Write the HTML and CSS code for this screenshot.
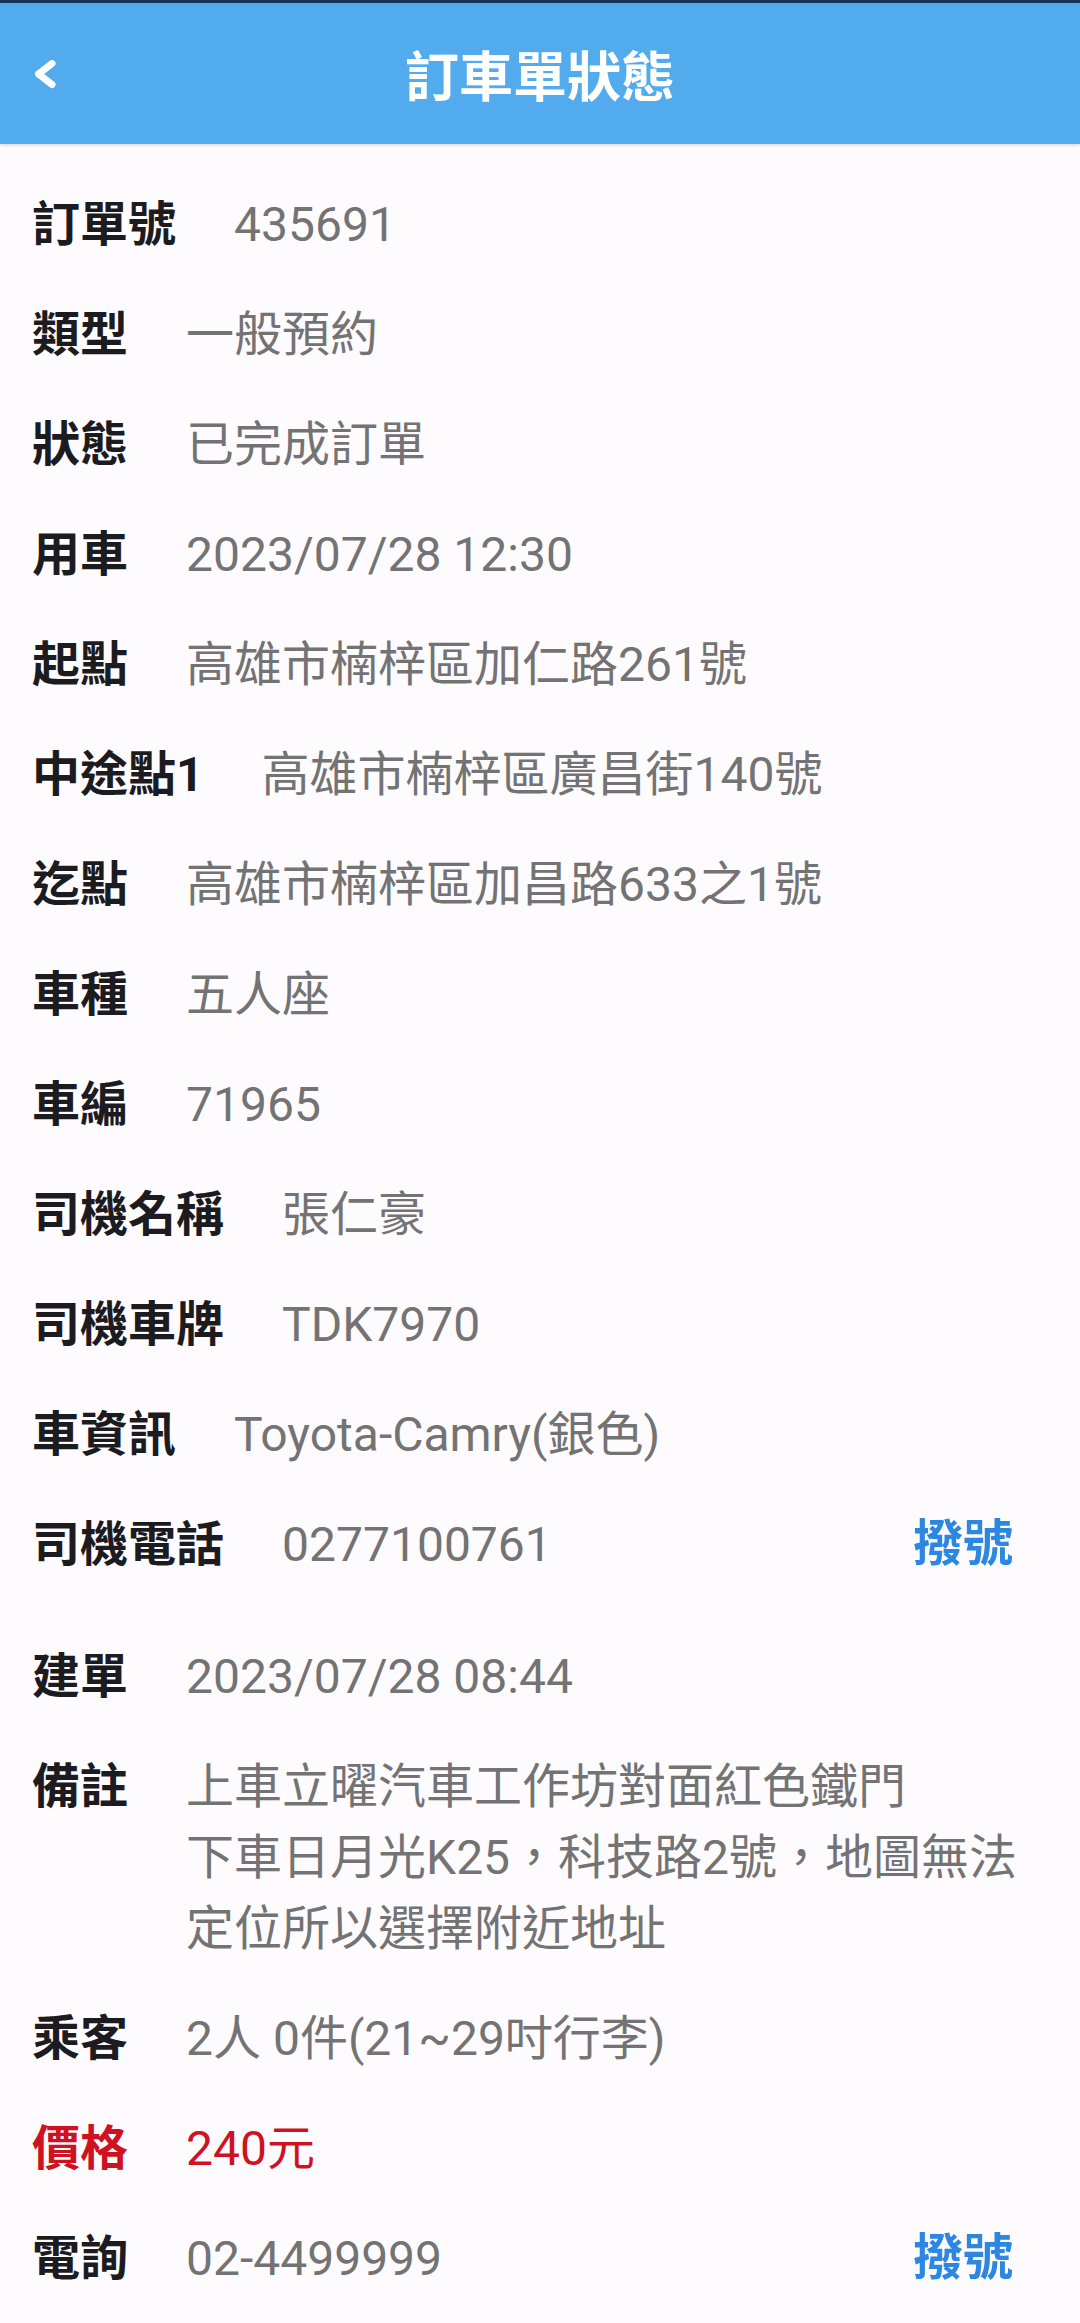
FILE: index.html
```html
<!DOCTYPE html>
<html lang="zh-Hant">
<head>
<meta charset="utf-8">
<title>訂車單狀態</title>
<link rel="stylesheet" href="styles.css">
</head>
<body>
<header class="appbar">
  <div class="appbar__lead">
    <svg class="appbar__back" width="80" height="141" viewBox="0 0 80 141" aria-label="返回">
      <polyline points="52,60.5 38.5,71 52,81.5" fill="none" stroke="#ffffff" stroke-width="7" stroke-linecap="round" stroke-linejoin="round"/>
    </svg>
  </div>
  <h1 class="appbar__title">訂車單狀態</h1>
  <div class="appbar__trail"></div>
</header>

<main class="detail">
  <div class="row"><span class="label">訂單號</span><span class="value">435691</span></div>
  <div class="row"><span class="label">類型</span><span class="value">一般預約</span></div>
  <div class="row"><span class="label">狀態</span><span class="value">已完成訂單</span></div>
  <div class="row"><span class="label">用車</span><span class="value">2023/07/28 12:30</span></div>
  <div class="row"><span class="label">起點</span><span class="value">高雄市楠梓區加仁路261號</span></div>
  <div class="row"><span class="label">中途點1</span><span class="value">高雄市楠梓區廣昌街140號</span></div>
  <div class="row"><span class="label">迄點</span><span class="value">高雄市楠梓區加昌路633之1號</span></div>
  <div class="row"><span class="label">車種</span><span class="value">五人座</span></div>
  <div class="row"><span class="label">車編</span><span class="value">71965</span></div>
  <div class="row"><span class="label">司機名稱</span><span class="value">張仁豪</span></div>
  <div class="row"><span class="label">司機車牌</span><span class="value">TDK7970</span></div>
  <div class="row"><span class="label">車資訊</span><span class="value">Toyota-Camry(銀色)</span></div>
  <div class="row row--call"><span class="label">司機電話</span><span class="value">0277100761</span><button class="call">撥號</button></div>
  <div class="row"><span class="label">建單</span><span class="value">2023/07/28 08:44</span></div>
  <div class="row"><span class="label">備註</span><span class="value">上車立曜汽車工作坊對面紅色鐵門<br>下車日月光K25，科技路2號，地圖無法<br>定位所以選擇附近地址</span></div>
  <div class="row"><span class="label">乘客</span><span class="value">2人 0件(21~29吋行李)</span></div>
  <div class="row row--price"><span class="label">價格</span><span class="value">240元</span></div>
  <div class="row row--call"><span class="label">電詢</span><span class="value">02-4499999</span><button class="call">撥號</button></div>
</main>
</body>
</html>
```

FILE: styles.css
```css
html, body {
  margin: 0;
  padding: 0;
}

body {
  background: #fefbff;
  font-family: Roboto, "Noto Sans CJK TC", sans-serif;
  overflow: hidden;
}

.appbar {
  box-sizing: border-box;
  height: 144px;
  border-top: 3px solid #173553;
  background: #52abed;
  display: grid;
  grid-template-columns: 1fr auto 1fr;
  align-items: center;
  box-shadow: 0 1px 3px rgba(0, 0, 0, 0.18);
}

.appbar__lead {
  height: 141px;
}

.appbar__back {
  display: block;
}

.appbar__title {
  margin: 0;
  color: #ffffff;
  font-family: "Noto Sans CJK TC", sans-serif;
  font-weight: 700;
  font-size: 54px;
  line-height: 64px;
  letter-spacing: 0;
}

.detail {
  padding: 25px 0 0 32px;
}

.row {
  display: flex;
  align-items: flex-start;
  padding: 19.5px 67px 19.5px 0;
  line-height: 71px;
  font-size: 48px;
}

.row--call {
  padding-bottom: 41.5px;
}

.label {
  flex: none;
  margin-right: 58px;
  font-weight: 700;
  color: #1c1b1f;
}

.value {
  color: #737373;
  font-weight: 400;
  white-space: nowrap;
}

.row--price .label,
.row--price .value {
  color: #cf1222;
}

.call {
  margin-left: auto;
  padding: 0;
  border: none;
  background: none;
  font-family: Roboto, "Noto Sans CJK TC", sans-serif;
  font-size: 50px;
  line-height: 71px;
  font-weight: 700;
  color: #2c87e0;
}
```
